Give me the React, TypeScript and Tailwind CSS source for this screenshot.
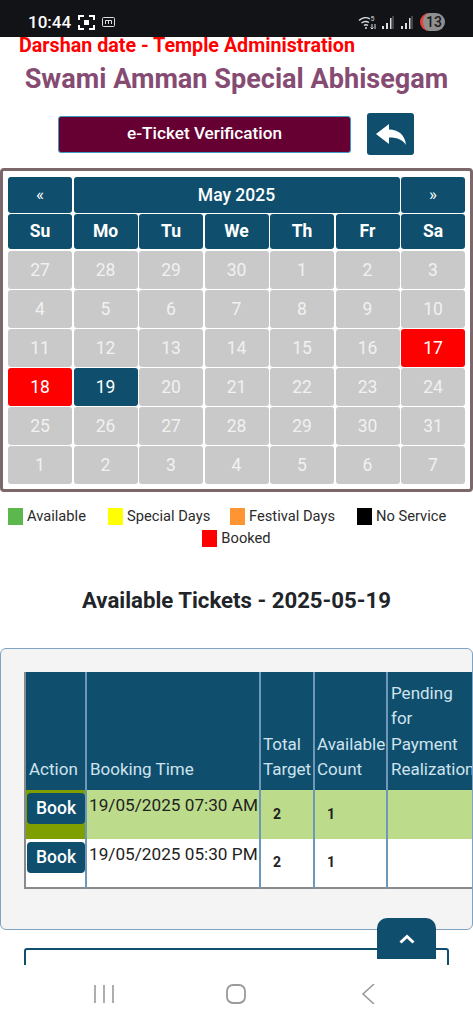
const weeks = [
  ["27", "28", "29", "30", "1", "2", "3"],
  ["4", "5", "6", "7", "8", "9", "10"],
  ["11", "12", "13", "14", "15", "16", "17"],
  ["18", "19", "20", "21", "22", "23", "24"],
  ["25", "26", "27", "28", "29", "30", "31"],
  ["1", "2", "3", "4", "5", "6", "7"],
];
const days = ["Su", "Mo", "Tu", "We", "Th", "Fr", "Sa"];

function dayClass(w: number, d: number) {
  if ((w === 2 && d === 6) || (w === 3 && d === 0)) return "bg-[#ff0000] text-white";
  if (w === 3 && d === 1) return "bg-[#0f4f6d] text-white";
  return "bg-[#c9c9c9] text-[#f1f1f1]";
}

function Legend({ color, label, gap }: { color: string; label: string; gap: string }) {
  return (
    <div className={`flex items-center gap-[4px] ${gap}`}>
      <span className={`w-[15px] h-[17px] ${color}`} />
      <span>{label}</span>
    </div>
  );
}

function Row({ bg, time, first }: { bg: string; time: string; first: boolean }) {
  return (
    <tr className={`h-[49px] ${bg}`}>
      <td className={`border-r-2 border-[#6f98b8] p-0 align-top relative ${first ? "bg-[#7f9f00]" : ""}`}>
        <button className="block ml-[1px] mt-[3px] w-[58px] h-[31px] rounded-[4px] bg-[#0f4f6d] text-white text-[17.5px] font-medium">
          Book
        </button>
      </td>
      <td className="border-r-2 border-[#6f98b8] px-[2px] pt-[3px] align-top text-[17.2px] leading-[24px] text-[#222] whitespace-nowrap">{time}</td>
      <td className="border-r-2 border-[#6f98b8] pl-[12px] text-[14px] font-bold text-[#222]">2</td>
      <td className="border-r-2 border-[#6f98b8] pl-[12px] text-[14px] font-bold text-[#222]">1</td>
      <td />
    </tr>
  );
}

export default function App() {
  const th = "border-r-2 border-[#6f98b8] pb-[7px] text-left align-bottom font-normal";
  return (
    <div className="relative w-[473px] h-[1024px] overflow-hidden bg-white flex flex-col font-['Roboto',sans-serif]">
      <div className="relative z-10 h-[37px] shrink-0 bg-[#121317] text-white flex items-center pl-[28px] pr-[28px] pt-[7px]">
        <span className="text-[17px] font-medium leading-none">10:44</span>
        <svg className="ml-[7px]" width="17" height="15" viewBox="0 0 17 15" fill="none" stroke="white" strokeWidth="2">
          <path d="M1 5V1h5M11 1h5v4M16 10v4h-5M6 14H1v-4" />
          <rect x="6" y="5" width="5" height="5" fill="white" stroke="none" />
        </svg>
        <svg className="ml-[7px]" width="13" height="10" viewBox="0 0 13 10" fill="none" stroke="#ddd" strokeWidth="1">
          <rect x="0.5" y="0.5" width="12" height="9" rx="1" />
          <path d="M3.5 7V3.5h6V7M6.5 3.5V7" />
        </svg>
        <div className="ml-auto flex items-center">
          <svg width="19" height="15" viewBox="0 0 19 15" fill="none" stroke="#ddd" strokeWidth="1.4">
            <path d="M1 5.500C4.500 2 9 2 12 4M3.500 8C6 6 8.500 6 11 7.500M6 10.500c1.200-.9 2.500-.9 4 0" />
            <circle cx="8" cy="13" r="1" fill="#ddd" stroke="none" />
            <path d="M14 9v5M12.500 12.500l1.500 1.500 1.500-1.500M17 14V9" strokeWidth="1" />
            <text x="12.500" y="6" fontSize="7" fill="#ddd" stroke="none" fontFamily="Roboto">5</text>
          </svg>
          <svg className="ml-[5px]" width="12" height="13" viewBox="0 0 12 13" fill="#ddd">
            <rect x="0" y="10" width="2" height="3" /><rect x="4" y="7" width="2" height="6" /><rect x="8" y="2" width="1.500" height="11" /><rect x="10.500" y="0" width="1" height="13" fill="#777" />
          </svg>
          <svg className="ml-[7px]" width="12" height="13" viewBox="0 0 12 13" fill="#ddd">
            <rect x="0" y="10" width="2" height="3" /><rect x="4" y="7" width="2" height="6" /><rect x="8" y="2" width="1.500" height="11" /><rect x="10.500" y="0" width="1" height="13" fill="#777" />
          </svg>
          <span className="ml-[7px] w-[25px] h-[18px] rounded-[9px] bg-[#8f8f90] border-l-[3px] border-[#e8403a] flex items-center justify-center text-[14px] font-medium text-[#1a1a1a] leading-none">13</span>
        </div>
      </div>

      <div className="flex-1 min-h-0">
        <div className="pl-[19px] text-[19.7px] leading-[18px] font-bold text-[#ff0000] whitespace-nowrap">Darshan date - Temple Administration</div>
        <h1 className="mt-[6px] text-center text-[27.1px] leading-[36px] font-bold text-[#864b72] whitespace-nowrap">Swami Amman Special Abhisegam</h1>
        <div className="mt-[16px] flex items-center pl-[58px]">
          <button className="w-[293px] h-[37px] rounded-[3px] bg-[#670032] border border-[#3d9bc4] text-white text-[17.2px] font-medium">e-Ticket Verification</button>
          <button className="ml-[16px] w-[47px] h-[42px] rounded-[3px] bg-[#0f4f6d] flex items-center justify-center">
            <svg width="30" height="21" viewBox="0 0 30 21" fill="white">
              <path d="M0 10 13 0v5.500c9 0 16 5 17 15.500-3-5-8-7.500-17-7.500V20z" />
            </svg>
          </button>
        </div>

        <div className="mt-[13px] h-[324px] rounded-[4px] border-[3px] border-[#7c686b] px-[5px] pt-[6px]">
          <div className="grid grid-cols-[64px_1fr_64px] gap-x-[1.5px] h-[36px] w-[457px]">
            <div className="rounded-[3px] bg-[#0f4f6d] text-white flex items-center justify-center text-[17px]">«</div>
            <div className="rounded-[3px] bg-[#0f4f6d] text-white flex items-center justify-center text-[17.5px] font-medium">May 2025</div>
            <div className="rounded-[3px] bg-[#0f4f6d] text-white flex items-center justify-center text-[17px]">»</div>
          </div>
          <div className="grid grid-cols-7 gap-x-[1.5px] mt-[1px] w-[457px]">
            {days.map((d) => (
              <div key={d} className="h-[35px] rounded-[3px] bg-[#0f4f6d] text-white flex items-center justify-center text-[17.5px] font-bold">{d}</div>
            ))}
          </div>
          <div className="grid grid-cols-7 gap-x-[1.5px] gap-y-[1.5px] mt-[2px] w-[457px]">
            {weeks.map((week, w) =>
              week.map((n, d) => (
                <div key={`${w}-${d}`} className={`h-[37.5px] rounded-[3px] flex items-center justify-center text-[17.5px] ${dayClass(w, d)}`}>{n}</div>
              ))
            )}
          </div>
        </div>

        <div className="mt-[13px] text-[14.7px] leading-[20px] text-[#2b2b2b]">
          <div className="flex pl-[8px] h-[22px] items-center">
            <Legend color="bg-[#5cb84c]" label="Available" gap="w-[100px]" />
            <Legend color="bg-[#ffff00]" label="Special Days" gap="w-[122px]" />
            <Legend color="bg-[#ff9433]" label="Festival Days" gap="w-[127px]" />
            <Legend color="bg-[#000000]" label="No Service" gap="" />
          </div>
          <div className="flex justify-center h-[22px] items-center">
            <Legend color="bg-[#ff0000]" label="Booked" gap="" />
          </div>
        </div>

        <h2 className="mt-[37px] text-center text-[22.2px] leading-[28px] font-bold text-[#212529]">Available Tickets - 2025-05-19</h2>

        <div className="mt-[34px] ml-0 w-[473px] h-[282px] rounded-[6px] border border-[#7fa3c2] bg-[#f4f4f4] pl-[23px] pt-[23px] overflow-hidden">
          <table className="table-fixed border-collapse w-[450px] border-b-2 border-l-2 border-[#8a8a8a] text-[17px] leading-[25.6px]">
            <colgroup>
              <col className="w-[61px]" />
              <col className="w-[174px]" />
              <col className="w-[54px]" />
              <col className="w-[73px]" />
              <col className="w-[88px]" />
            </colgroup>
            <thead>
              <tr className="h-[118px] bg-[#0f4f6d] text-[#cfe3ee]">
                <th className={`${th} px-[3px]`}>Action</th>
                <th className={`${th} px-[3px]`}>Booking Time</th>
                <th className={`${th} px-[2px]`}>Total Target</th>
                <th className={`${th} px-[2px]`}>Available Count</th>
                <th className="px-[3px] pb-[7px] text-left align-bottom font-normal">Pending for Payment Realization</th>
              </tr>
            </thead>
            <tbody>
              <Row bg="bg-[#bcdc8c]" time="19/05/2025 07:30 AM" first />
              <Row bg="bg-white" time="19/05/2025 05:30 PM" first={false} />
            </tbody>
          </table>
        </div>

        <div className="mt-[18px] ml-[24px] w-[425px] h-[60px] rounded-[3px] border-2 border-[#0f4f6d]" />
      </div>

      <button className="absolute z-20 left-[377px] top-[918px] w-[59px] h-[41px] rounded-t-[10px] bg-[#0f4f6d] flex items-center justify-center">
        <svg width="16" height="10" viewBox="0 0 16 10" fill="none" stroke="white" strokeWidth="3">
          <path d="M1.500 8.500 8 2.500l6.500 6" />
        </svg>
      </button>

      <div className="relative z-10 h-[59px] shrink-0 bg-white flex items-start pt-[19px]">
        <svg className="ml-[94px]" width="20" height="20" viewBox="0 0 20 20" stroke="#9a9a9a" strokeWidth="1.6" fill="none">
          <path d="M1 1v18M10 1v18M19 1v18" />
        </svg>
        <svg className="ml-[111px]" width="22" height="20" viewBox="0 0 22 20" stroke="#9a9a9a" strokeWidth="1.8" fill="none">
          <rect x="2" y="1" width="18" height="18" rx="6" />
        </svg>
        <svg className="ml-[114px]" width="16" height="20" viewBox="0 0 16 20" stroke="#9a9a9a" strokeWidth="1.6" fill="none">
          <path d="M13 0 2 10l11 10" />
        </svg>
      </div>
    </div>
  );
}
